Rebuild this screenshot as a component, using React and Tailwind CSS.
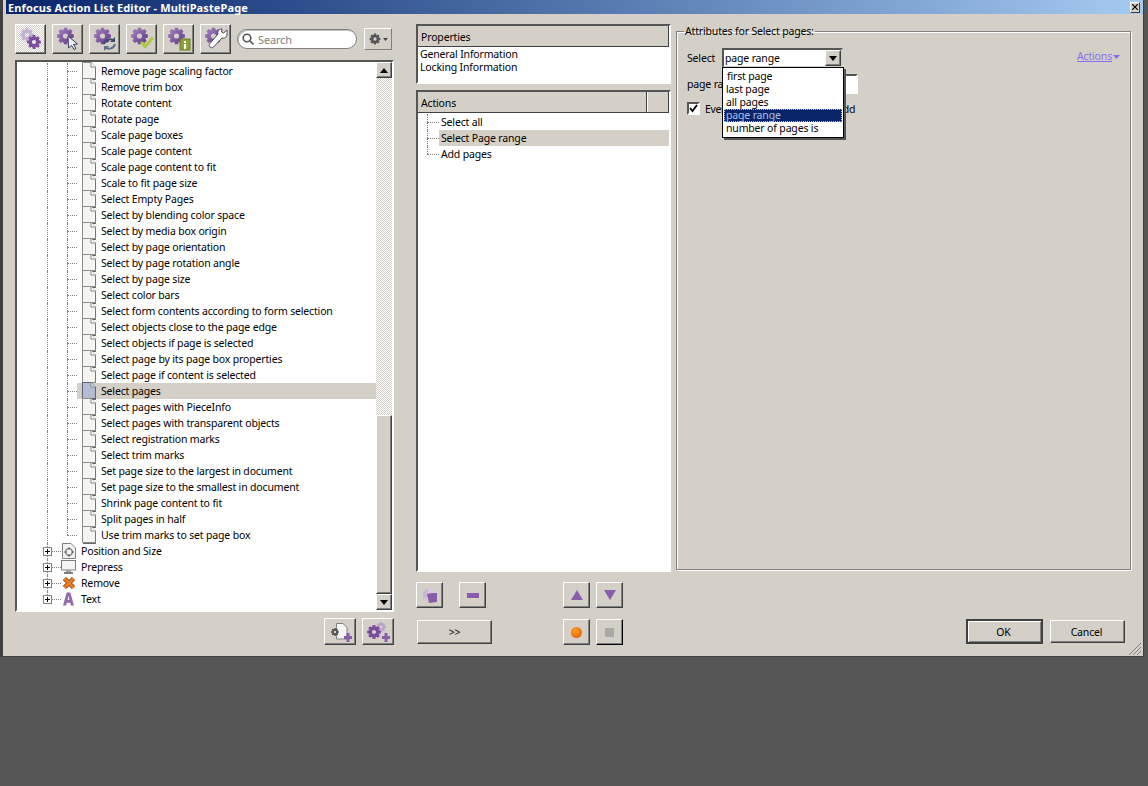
const leaves = [
  "Remove page scaling factor",
  "Remove trim box",
  "Rotate content",
  "Rotate page",
  "Scale page boxes",
  "Scale page content",
  "Scale page content to fit",
  "Scale to fit page size",
  "Select Empty Pages",
  "Select by blending color space",
  "Select by media box origin",
  "Select by page orientation",
  "Select by page rotation angle",
  "Select by page size",
  "Select color bars",
  "Select form contents according to form selection",
  "Select objects close to the page edge",
  "Select objects if page is selected",
  "Select page by its page box properties",
  "Select page if content is selected",
  "Select pages",
  "Select pages with PieceInfo",
  "Select pages with transparent objects",
  "Select registration marks",
  "Select trim marks",
  "Set page size to the largest in document",
  "Set page size to the smallest in document",
  "Shrink page content to fit",
  "Split pages in half",
  "Use trim marks to set page box",
];

const raised =
  "border border-t-white border-l-white border-r-[#404040] border-b-[#404040] shadow-[inset_-1px_-1px_0_#808080]";

const gearPath = (cx, cy, r) => {
  const pts = [];
  for (let i = 0; i < 8; i++) {
    const a = (i * Math.PI) / 4;
    const w = 0.26;
    [
      [a - w - 0.1, r * 0.74],
      [a - w + 0.08, r],
      [a + w - 0.08, r],
      [a + w + 0.1, r * 0.74],
    ].forEach(([t, d]) => pts.push(`${(cx + Math.cos(t) * d).toFixed(2)} ${(cy + Math.sin(t) * d).toFixed(2)}`));
  }
  const h = r * 0.3;
  return `M${pts.join("L")}Z M${cx - h} ${cy}a${h} ${h} 0 1 0 ${h * 2} 0a${h} ${h} 0 1 0 ${-h * 2} 0Z`;
};

const Gear = ({ cx, cy, r, fill = "url(#gearFill)", opacity = 1 }) => (
  <path d={gearPath(cx, cy, r)} fill={fill} opacity={opacity} fillRule="evenodd" />
);

const ToolIcon = ({ kind }) => (
  <svg width="24" height="24" viewBox="0 0 24 24">
    {kind === "pressed" ? (
      <>
        <Gear cx={8} cy={8} r={7} fill="#bda8d0" opacity={0.85} />
        <Gear cx={15} cy={15} r={7} fill="#7d4c9f" />
      </>
    ) : (
      <Gear cx={9.500} cy={9} r={8.500} />
    )}
    {kind === "cursor" && (
      <path d="M12 9l9.500 8-4 .5 2.500 4-2 1-2.500-4-3 2.500z" fill="#e8ecf4" stroke="#3a3a5a" strokeWidth="1" />
    )}
    {kind === "sync" && (
      <g fill="none" strokeWidth="2">
        <path d="M11 17a6 6 0 0 1 10-3" stroke="#3d4a6a" />
        <path d="M22 17a6 6 0 0 1-10 3" stroke="#5f6f90" />
        <path d="M22 10v5h-5z" fill="#3d4a6a" strokeWidth="0" />
        <path d="M11 24v-5h5z" fill="#5f6f90" strokeWidth="0" />
      </g>
    )}
    {kind === "check" && <path d="M11 15l4 4.500 8-9" fill="none" stroke="#b0c83c" strokeWidth="3" />}
    {kind === "info" && (
      <g>
        <rect x="13" y="12" width="10" height="11" fill="#8ea23a" stroke="#6c7c28" />
        <rect x="17" y="14" width="2" height="2" fill="#fff" />
        <rect x="17" y="17" width="2" height="5" fill="#fff" />
      </g>
    )}
    {kind === "wrench" && (
      <path
        d="M23 3l-3.500 3-2-1 .5-3c-2.500-.5-5 2-4 5L6 16.500c-1 1-1 2.500 0 3.500s2.500 1 3.500 0L18 11c3 1 6-1.500 5-8z"
        fill="#fff"
        stroke="#4a4a5a"
        strokeWidth="1"
      />
    )}
  </svg>
);

const PageIcon = ({ selected }) => (
  <svg width="14" height="18" viewBox="0 0 14 18" className="-my-px shrink-0">
    <path
      d="M.5.500H9L13.500 5V16.500H.5Z"
      fill={selected ? "#b4bcd4" : "#f4f4f0"}
      stroke={selected ? "#5a6078" : "#8a8a88"}
    />
    <path d="M9 .5V5H13.500" fill={selected ? "#d8dcea" : "#fff"} stroke="#8a8a88" />
    <path d="M1 17.500H14V6" fill="none" stroke="#6a6a68" />
  </svg>
);

const CategoryIcon = ({ kind }) => {
  if (kind === "position")
    return (
      <svg width="14" height="16" viewBox="0 0 14 16">
        <path d="M.5.500H9L13.500 5V15.500H.5Z" fill="#f2f2f0" stroke="#808080" />
        <circle cx="7" cy="9" r="3.500" fill="none" stroke="#555" />
        <path d="M7 4v3M7 11v3M2 9h3M9 9h3" stroke="#555" strokeWidth="0.8" />
      </svg>
    );
  if (kind === "monitor")
    return (
      <svg width="15" height="14" viewBox="0 0 15 14" className="-ml-px">
        <rect x=".5" y=".5" width="14" height="9.500" fill="#f4f4f4" stroke="#808080" />
        <rect x="5" y="10" width="5" height="2" fill="#a0a0a0" />
        <rect x="3" y="12" width="9" height="2" fill="#808080" />
      </svg>
    );
  if (kind === "remove")
    return (
      <svg width="14" height="14" viewBox="0 0 14 14">
        <path d="M2.500 2.500l9 9M11.500 2.500l-9 9" stroke="#7a3c10" strokeWidth="4.500" />
        <path d="M2.500 2.500l9 9M11.500 2.500l-9 9" stroke="#ee7a1c" strokeWidth="3" />
      </svg>
    );
  return (
    <svg width="11" height="14" viewBox="0 0 12 14" className="ml-px">
      <path d="M4 0h4l4 14H8.500L8 11H4l-.5 3H0ZM5 8h2L6 3.500Z" fill="#9468b0" fillRule="evenodd" />
    </svg>
  );
};

const Dither = "bg-[repeating-conic-gradient(#ffffff_0_25%,#d4d0c8_0_50%)] bg-[length:2px_2px]";

const Arrow = ({ up }) => (
  <svg width="8" height="5" viewBox="0 0 8 5">
    <path d={up ? "M4 0l4 5H0z" : "M0 0h8L4 5z"} fill="#000" />
  </svg>
);

const LeafRow = ({ label, last }) => {
  const selected = label === "Select pages";
  return (
    <div className="flex h-4 items-stretch pl-[30px]">
      <div className="w-[20px] shrink-0 border-l border-dotted border-[#808080]" />
      <div className="relative w-[10px] shrink-0">
        <div className={`w-px border-l border-dotted border-[#808080] ${last ? "h-2" : "h-4"}`} />
        <div className="absolute left-0 top-2 w-[10px] border-t border-dotted border-[#808080]" />
      </div>
      <div className={`flex flex-1 items-center pl-[5px] ${selected ? "bg-[#d4d0c8]" : ""}`}>
        <PageIcon selected={selected} />
        <span className="ml-[5px] whitespace-nowrap">{label}</span>
      </div>
    </div>
  );
};

const CategoryRow = ({ label, kind, last }) => (
  <div className="flex h-4 items-center pl-[26px]">
    <div className="relative flex h-4 w-[9px] shrink-0 items-center">
      <div className={`absolute left-1 top-0 w-px border-l border-dotted border-[#808080] ${last ? "h-2" : "h-4"}`} />
      <div className="relative flex h-[9px] w-[9px] items-center justify-center border border-[#808080] bg-white">
        <div className="absolute h-px w-[5px] bg-black" />
        <div className="absolute h-[5px] w-px bg-black" />
      </div>
    </div>
    <div className="w-[9px] shrink-0 border-t border-dotted border-[#808080]" />
    <div className="flex w-[20px] shrink-0 pl-px">
      <CategoryIcon kind={kind} />
    </div>
    <span className="whitespace-nowrap">{label}</span>
  </div>
);

const ActionRow = ({ label, selected, last }) => (
  <div className="flex h-4 items-stretch pl-[9px]">
    <div className="relative w-[12px] shrink-0">
      <div className={`w-px border-l border-dotted border-[#808080] ${last ? "h-2" : "h-4"}`} />
      <div className="absolute left-0 top-2 w-[12px] border-t border-dotted border-[#808080]" />
    </div>
    <div className={`flex flex-1 items-center pl-[2px] ${selected ? "bg-[#d4d0c8]" : ""}`}>{label}</div>
  </div>
);

const SquareButton = ({ children, className = "" }) => (
  <div className={`flex items-center justify-center ${raised} ${className}`}>{children}</div>
);

const App = () => {
  const toolKinds = ["cursor", "sync", "check", "info", "wrench"];
  return (
    <div className="h-[786px] w-[1148px] overflow-hidden bg-[#555555] font-['Noto_Sans',sans-serif] text-[10.5px] leading-[13px] tracking-[-0.16px] text-[#000]">
      <svg width="0" height="0" className="block">
        <defs>
          <linearGradient id="gearFill" x1="0" y1="0" x2="1" y2="1">
            <stop offset="0" stopColor="#a884c4" />
            <stop offset="1" stopColor="#5c3684" />
          </linearGradient>
        </defs>
      </svg>
      <div className="relative h-[657px] w-[1144px] border-r border-b border-l-[3px] border-[#404040] bg-[#d4d0c8]">
        {/* title bar */}
        <div className="ml-[3px] flex h-[14px] items-center justify-between bg-gradient-to-r from-[#0a246a] to-[#a6caf0] pl-[2px] pr-[3px]">
          <span className="text-[11px] font-bold tracking-[0.12px] text-white">
            Enfocus Action List Editor - MultiPastePage
          </span>
          <div className="flex h-[11px] w-[10px] items-center justify-center border border-t-white border-l-white border-r-[#404040] border-b-[#404040] bg-[#d4d0c8]">
            <svg width="6" height="6" viewBox="0 0 6 6">
              <path d="M0 0l6 6M6 0L0 6" stroke="#000" strokeWidth="1.200" />
            </svg>
          </div>
        </div>

        <div className="flex pt-[10px]">
          {/* left column */}
          <div className="ml-[12px] flex w-[379px] shrink-0 flex-col">
            <div className="flex h-[30px] items-center">
              <SquareButton className={`h-[30px] w-[31px] ${Dither}`}>
                <ToolIcon kind="pressed" />
              </SquareButton>
              {toolKinds.map((kind) => (
                <SquareButton key={kind} className="ml-[6px] h-[30px] w-[31px]">
                  <ToolIcon kind={kind} />
                </SquareButton>
              ))}
              <div className="ml-[6px] flex h-[20px] w-[120px] items-center rounded-full border border-[#808080] bg-white pl-[4px] shadow-[inset_1px_1px_0_#c0c0c0]">
                <svg width="12" height="12" viewBox="0 0 12 12" fill="none" stroke="#555" strokeWidth="1.600">
                  <circle cx="5" cy="5" r="3.800" />
                  <path d="M8 8l3.500 3.500" />
                </svg>
                <span className="ml-[4px] text-[11px] text-[#808080]">Search</span>
              </div>
              <div className="ml-[7px] flex h-[22px] w-[28px] items-center justify-center gap-[2px] border border-t-white border-l-white border-r-[#808080] border-b-[#808080]">
                <svg width="12" height="12" viewBox="0 0 12 12">
                  <Gear cx={6} cy={6} r={5.500} fill="#555555" />
                </svg>
                <svg width="5" height="3" viewBox="0 0 5 3">
                  <path d="M0 0h5L2.500 3z" fill="#404040" />
                </svg>
              </div>
            </div>

            <div className="mt-[6px] flex h-[552px] border-2 border-t-[#555555] border-l-[#555555] border-r-white border-b-white bg-white">
              <div className="flex-1 overflow-hidden pt-px">
                {leaves.map((label, i) => (
                  <LeafRow key={label} label={label} last={i === leaves.length - 1} />
                ))}
                <CategoryRow label="Position and Size" kind="position" />
                <CategoryRow label="Prepress" kind="monitor" />
                <CategoryRow label="Remove" kind="remove" />
                <CategoryRow label="Text" kind="text" last />
              </div>
              <div className="flex w-4 shrink-0 flex-col">
                <SquareButton className="h-4 bg-[#d4d0c8]">
                  <Arrow up />
                </SquareButton>
                <div className={`flex flex-1 flex-col justify-end ${Dither}`}>
                  <div className={`h-[179px] bg-[#d4d0c8] ${raised}`} />
                </div>
                <SquareButton className="h-4 bg-[#d4d0c8]">
                  <Arrow />
                </SquareButton>
              </div>
            </div>

            <div className="mt-[6px] flex justify-end gap-[6px]">
              <SquareButton className="h-[27px] w-[32px]">
                <svg width="24" height="22" viewBox="0 0 24 22">
                  <path d="M8.500 2.500H15L19 6.500V18H8.500Z" fill="#f4f4f4" stroke="#808080" />
                  <Gear cx={7} cy={11} r={4} fill="#555555" />
                  <path d="M16 15h8v3h-8zM18.500 12h3v9h-3z" fill="#8a5cab" />
                </svg>
              </SquareButton>
              <SquareButton className="h-[27px] w-[32px]">
                <svg width="24" height="22" viewBox="0 0 24 22">
                  <Gear cx={15} cy={6} r={5} fill="#b9a2cc" />
                  <Gear cx={8} cy={11} r={7} fill="#7a4c9c" />
                  <path d="M16 15h8v3h-8zM18.500 12h3v9h-3z" fill="#8a5cab" />
                </svg>
              </SquareButton>
            </div>
          </div>

          {/* middle column */}
          <div className="ml-[22px] flex w-[255px] shrink-0 flex-col">
            <div className="flex h-[60px] flex-col border-2 border-t-[#555555] border-l-[#555555] border-r-white border-b-white bg-white">
              <div className="flex h-[21px] items-center border-b border-b-[#404040] bg-[#d4d0c8] pl-[3px] pt-[2px] shadow-[inset_-1px_0_0_#404040]">
                Properties
              </div>
              <div className="pl-[2px] pt-px">
                <div>General Information</div>
                <div>Locking Information</div>
              </div>
            </div>

            <div className="mt-[6px] flex h-[482px] flex-col border-2 border-t-[#555555] border-l-[#555555] border-r-white border-b-white bg-white">
              <div className="flex h-[21px] shrink-0 border-b border-b-[#404040] bg-[#d4d0c8]">
                <div className="flex flex-1 items-center border-r border-r-[#404040] pl-[3px] pt-[2px]">Actions</div>
                <div className="w-[22px] shrink-0 border-r border-l border-r-[#404040] border-l-white" />
              </div>
              <div className="pt-px">
                <ActionRow label="Select all" />
                <ActionRow label="Select Page range" selected />
                <ActionRow label="Add pages" last />
              </div>
            </div>

            <div className="mt-[10px] flex h-[26px] items-stretch">
              <SquareButton className="w-[27px]">
                <svg width="16" height="16" viewBox="0 0 16 16">
                  <path d="M1 5l5-4v9l-5 2z" fill="#c9b6d8" />
                  <path d="M6 1h5v5H6z" fill="#d8cce2" />
                  <path d="M5 7l5-1h5v9l-8 1z" fill="#8a5cab" />
                </svg>
              </SquareButton>
              <SquareButton className="ml-[16px] w-[27px]">
                <div className="h-[5px] w-[12px] bg-[#8a5cab]" />
              </SquareButton>
              <SquareButton className="ml-[77px] w-[27px]">
                <svg width="12" height="10" viewBox="0 0 12 10">
                  <path d="M6 0l6 10H0z" fill="#8a5cab" />
                </svg>
              </SquareButton>
              <SquareButton className="ml-[6px] w-[27px]">
                <svg width="12" height="10" viewBox="0 0 12 10">
                  <path d="M0 0h12L6 10z" fill="#8a5cab" />
                </svg>
              </SquareButton>
            </div>

            <div className="mt-[11px] flex h-[26px] items-stretch">
              <SquareButton className="my-px ml-px w-[75px]">
                <span>&gt;&gt;</span>
              </SquareButton>
              <SquareButton className="ml-[71px] w-[27px]">
                <div className="h-[11px] w-[11px] rounded-full bg-[radial-gradient(circle_at_40%_35%,#ffa020,#e04e00)]" />
              </SquareButton>
              <SquareButton className="ml-[6px] w-[27px] border-r-black border-b-black">
                <div className="h-[9px] w-[9px] bg-[#a8a8a4]" />
              </SquareButton>
            </div>
          </div>

          {/* right column */}
          <div className="ml-[5px] flex w-[455px] shrink-0 flex-col">
            <fieldset className="h-[546px] border border-[#808080] px-[10px] shadow-[inset_1px_1px_0_#ffffff,1px_1px_0_#ffffff]">
              <legend className="ml-[-3px] px-px leading-[14px]">Attributes for Select pages:</legend>

              <div className="relative mt-[10px] flex h-[20px] items-center">
                <span className="w-[35px]">Select</span>
                <div className="flex h-[20px] w-[121px] items-center justify-between border-2 border-t-[#555555] border-l-[#555555] border-r-[#d4d0c8] border-b-[#d4d0c8] bg-white pl-[1px]">
                  page range
                  <SquareButton className="h-4 w-4 bg-[#d4d0c8]">
                    <Arrow />
                  </SquareButton>
                </div>
                <div className="absolute right-0 top-[2px] flex items-center gap-[1px] text-[#8a6cf0]">
                  <span className="underline">Actions</span>
                  <svg width="7" height="4" viewBox="0 0 7 4">
                    <path d="M0 0h7L3.500 4z" fill="#8a6cf0" />
                  </svg>
                </div>
                {/* open combo list */}
                <div className="absolute left-[35px] top-[19px] z-10 w-[122px] border border-black bg-white px-[3px] py-[2px] shadow-[2px_2px_0_#555555]">
                  <div className="h-[13px] pl-px">first page</div>
                  <div className="h-[13px]">last page</div>
                  <div className="h-[13px]">all pages</div>
                  <div className="-mx-[2px] h-[13px] border border-dotted border-[#c0c0c0] bg-[#0a246a] pl-px leading-[11px] text-[#a8c0e8]">
                    page range
                  </div>
                  <div className="h-[13px]">number of pages is</div>
                </div>
              </div>

              <div className="mt-[6px] flex h-[20px] items-center">
                <span className="w-[155px] shrink-0 whitespace-nowrap">page range</span>
                <div className="h-[20px] w-[16px] border-2 border-t-[#555555] border-l-[#555555] border-r-white border-b-white bg-white" />
              </div>

              <div className="mt-[8px] flex h-[13px] items-center">
                <div className="flex h-[13px] w-[13px] shrink-0 items-center justify-center border-2 border-t-[#555555] border-l-[#555555] border-r-white border-b-white bg-white">
                  <svg width="9" height="9" viewBox="0 0 9 9">
                    <path d="M1 4l2.500 3L8 1" fill="none" stroke="#000" strokeWidth="1.800" />
                  </svg>
                </div>
                <span className="ml-[5px] mt-[2px] whitespace-nowrap tracking-[-0.36px]">Even number of pages: then add</span>
              </div>
            </fieldset>

            <div className="mt-[49px] flex items-center">
              <div className="ml-[290px] flex h-[25px] w-[77px] items-center justify-center border-2 border-[#404040] pr-[2px] pt-[2px] shadow-[inset_1px_1px_0_#ffffff,inset_-1px_-1px_0_#808080]">
                OK
              </div>
              <SquareButton className="ml-[7px] h-[23px] w-[75px] pr-[2px] pt-[2px]">Cancel</SquareButton>
            </div>
          </div>
        </div>

        {/* resize grip */}
        <div className="absolute bottom-0 right-px h-[14px] w-[14px]">
          <svg width="14" height="14" viewBox="0 0 14 14" stroke="#808080">
            <path d="M13 1L1 13M13 5L5 13M13 9L9 13" />
          </svg>
        </div>
      </div>
    </div>
  );
};

export default App;
